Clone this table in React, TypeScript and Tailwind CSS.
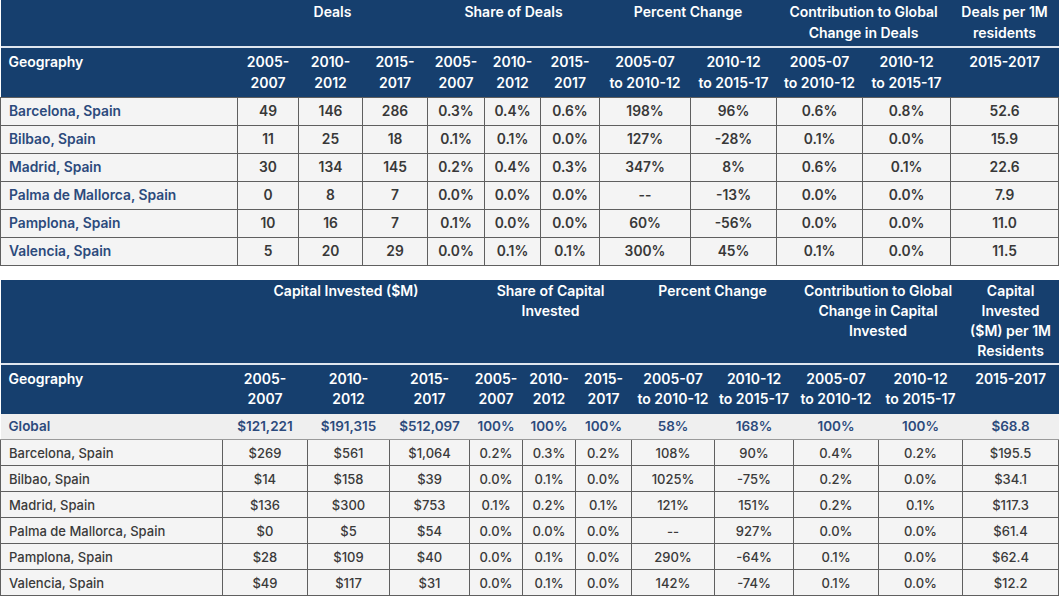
const dealRows = [
  ['Barcelona, Spain', '49', '146', '286', '0.3%', '0.4%', '0.6%', '198%', '96%', '0.6%', '0.8%', '52.6'],
  ['Bilbao, Spain', '11', '25', '18', '0.1%', '0.1%', '0.0%', '127%', '-28%', '0.1%', '0.0%', '15.9'],
  ['Madrid, Spain', '30', '134', '145', '0.2%', '0.4%', '0.3%', '347%', '8%', '0.6%', '0.1%', '22.6'],
  ['Palma de Mallorca, Spain', '0', '8', '7', '0.0%', '0.0%', '0.0%', '--', '-13%', '0.0%', '0.0%', '7.9'],
  ['Pamplona, Spain', '10', '16', '7', '0.1%', '0.0%', '0.0%', '60%', '-56%', '0.0%', '0.0%', '11.0'],
  ['Valencia, Spain', '5', '20', '29', '0.0%', '0.1%', '0.1%', '300%', '45%', '0.1%', '0.0%', '11.5'],
];

const globalRow = ['Global', '$121,221', '$191,315', '$512,097', '100%', '100%', '100%', '58%', '168%', '100%', '100%', '$68.8'];

const capitalRows = [
  ['Barcelona, Spain', '$269', '$561', '$1,064', '0.2%', '0.3%', '0.2%', '108%', '90%', '0.4%', '0.2%', '$195.5'],
  ['Bilbao, Spain', '$14', '$158', '$39', '0.0%', '0.1%', '0.0%', '1025%', '-75%', '0.2%', '0.0%', '$34.1'],
  ['Madrid, Spain', '$136', '$300', '$753', '0.1%', '0.2%', '0.1%', '121%', '151%', '0.2%', '0.1%', '$117.3'],
  ['Palma de Mallorca, Spain', '$0', '$5', '$54', '0.0%', '0.0%', '0.0%', '--', '927%', '0.0%', '0.0%', '$61.4'],
  ['Pamplona, Spain', '$28', '$109', '$40', '0.0%', '0.1%', '0.0%', '290%', '-64%', '0.1%', '0.0%', '$62.4'],
  ['Valencia, Spain', '$49', '$117', '$31', '0.0%', '0.1%', '0.0%', '142%', '-74%', '0.1%', '0.0%', '$12.2'],
];

const subHeads = [
  ['2005-', '2007'],
  ['2010-', '2012'],
  ['2015-', '2017'],
  ['2005-', '2007'],
  ['2010-', '2012'],
  ['2015-', '2017'],
  ['2005-07', 'to 2010-12'],
  ['2010-12', 'to 2015-17'],
  ['2005-07', 'to 2010-12'],
  ['2010-12', 'to 2015-17'],
  ['2015-2017'],
];

function Lines({ lines }: { lines: string[] }) {
  return (
    <>
      {lines.map((l, i) => (
        <div key={i} className="whitespace-nowrap">{l}</div>
      ))}
    </>
  );
}

function SubHeaderRow() {
  return (
    <tr className="h-[50px]">
      <th className="px-2 pt-[4px] text-left align-top font-semibold">Geography</th>
      {subHeads.map((lines, i) => (
        <th key={i} className="pt-[4px] text-center align-top font-semibold">
          <Lines lines={lines} />
        </th>
      ))}
    </tr>
  );
}

function DealsTable() {
  const widths = ['w-[237px]', 'w-[61px]', 'w-[64px]', 'w-[65px]', 'w-[57px]', 'w-[56px]', 'w-[59px]', 'w-[91px]', 'w-[86px]', 'w-[86px]', 'w-[88px]', 'w-[108px]'];
  const groups = [
    { span: 1, lines: [''] },
    { span: 3, lines: ['Deals'] },
    { span: 3, lines: ['Share of Deals'] },
    { span: 2, lines: ['Percent Change'] },
    { span: 2, lines: ['Contribution to Global', 'Change in Deals'] },
    { span: 1, lines: ['Deals per 1M', 'residents'] },
  ];
  return (
    <table className="w-[1058px] table-fixed border-collapse text-[13.8px] leading-[20.5px]">
      <colgroup>
        {widths.map((w, i) => (
          <col key={i} className={w} />
        ))}
      </colgroup>
      <thead className="bg-[#163f6e] text-[14px] text-white">
        <tr className="h-[47px]">
          {groups.map((g, i) => (
            <th key={i} colSpan={g.span} className="border-b-2 border-[#dfe6ef] pt-[2px] text-center align-top font-semibold">
              <Lines lines={g.lines} />
            </th>
          ))}
        </tr>
        <SubHeaderRow />
      </thead>
      <tbody className="bg-[#f4f4f4]">
        {dealRows.map((row) => (
          <tr key={row[0]} className="h-[28px]">
            {row.map((cell, i) => (
              <td
                key={i}
                className={
                  i === 0
                    ? 'border border-[#5f5f5f] px-2 text-left font-semibold text-[#2c4a7c]'
                    : 'border border-[#5f5f5f] text-center font-semibold text-[#383838]'
                }
              >
                {cell}
              </td>
            ))}
          </tr>
        ))}
      </tbody>
    </table>
  );
}

function CapitalTable() {
  const widths = ['w-[222px]', 'w-[85px]', 'w-[82px]', 'w-[80px]', 'w-[53px]', 'w-[53px]', 'w-[56px]', 'w-[83px]', 'w-[79px]', 'w-[85px]', 'w-[84px]', 'w-[96px]'];
  const groups = [
    { span: 1, lines: [''] },
    { span: 3, lines: ['Capital Invested ($M)'] },
    { span: 3, lines: ['Share of Capital', 'Invested'] },
    { span: 2, lines: ['Percent Change'] },
    { span: 2, lines: ['Contribution to Global', 'Change in Capital', 'Invested'] },
    { span: 1, lines: ['Capital', 'Invested', '($M) per 1M', 'Residents'] },
  ];
  return (
    <table className="w-[1058px] table-fixed border-collapse text-[13.5px] leading-[20px]">
      <colgroup>
        {widths.map((w, i) => (
          <col key={i} className={w} />
        ))}
      </colgroup>
      <thead className="bg-[#163f6e] text-[14px] text-white">
        <tr className="h-[84px]">
          {groups.map((g, i) => (
            <th key={i} colSpan={g.span} className="border-b-2 border-[#dfe6ef] pt-[1px] text-center align-top font-semibold">
              <Lines lines={g.lines} />
            </th>
          ))}
        </tr>
        <SubHeaderRow />
      </thead>
      <tbody className="bg-[#f4f4f4]">
        <tr className="h-[26px] bg-[#efefef]">
          {globalRow.map((cell, i) => (
            <td
              key={i}
              className={
                i === 0
                  ? 'border-b border-[#9a9a9a] px-2 text-left font-semibold text-[#2c4a7c]'
                  : 'border-b border-[#9a9a9a] text-center font-semibold text-[#2c4a7c]'
              }
            >
              {cell}
            </td>
          ))}
        </tr>
        {capitalRows.map((row) => (
          <tr key={row[0]} className="h-[26px]">
            {row.map((cell, i) => (
              <td
                key={i}
                className={
                  i === 0
                    ? 'border border-[#5f5f5f] px-2 text-left text-[13px] font-medium text-[#3a3a3a]'
                    : 'border border-[#5f5f5f] text-center text-[13px] font-medium text-[#3a3a3a]'
                }
              >
                {cell}
              </td>
            ))}
          </tr>
        ))}
      </tbody>
    </table>
  );
}

export default function App() {
  return (
    <div className="h-[596px] w-[1060px] overflow-hidden bg-white font-['Inter',sans-serif]">
      <DealsTable />
      <div className="h-[14px]" />
      <CapitalTable />
    </div>
  );
}
